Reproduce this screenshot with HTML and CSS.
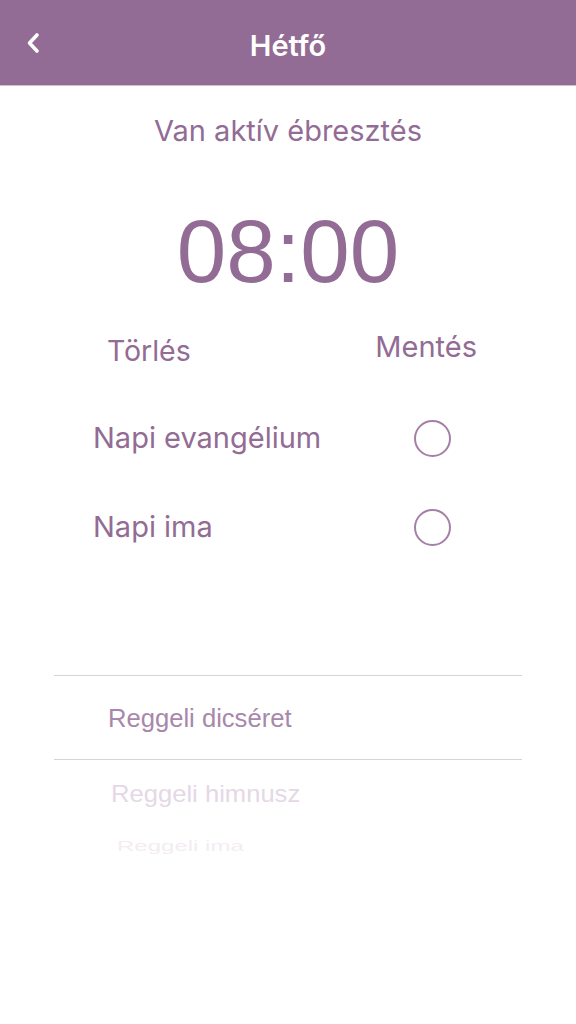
FILE: index.html
```html
<!DOCTYPE html>
<html lang="hu">
<head>
<meta charset="utf-8">
<title>Hétfő</title>
<link rel="stylesheet" href="styles.css">
</head>
<body>
<header class="topbar">
  <button class="back" aria-label="Vissza">
    <svg width="16" height="22" viewBox="0 0 16 22"><path d="M12 3 L4.5 11 L12 19" fill="none" stroke="#fff" stroke-width="3.6" stroke-linecap="round" stroke-linejoin="round"/></svg>
  </button>
  <h1 class="title">Hétfő</h1>
</header>
<main class="content">
  <p class="status">Van aktív ébresztés</p>
  <div class="time">08:00</div>
  <div class="actions">
    <span class="action delete">Törlés</span>
    <span class="action save">Mentés</span>
  </div>
  <ul class="options">
    <li class="option"><span>Napi evangélium</span><span class="radio"></span></li>
    <li class="option"><span>Napi ima</span><span class="radio"></span></li>
  </ul>
  <div class="picker">
    <div class="pick selected">Reggeli dicséret</div>
    <div class="pick next">Reggeli himnusz</div>
    <div class="pick far">Reggeli ima</div>
  </div>
</main>
</body>
</html>
```
FILE: styles.css
```css
* { box-sizing: border-box; }
html, body { margin: 0; padding: 0; background: #fff; }
body { width: 576px; height: 1024px; font-family: Inter, "Noto Sans", sans-serif; color: #926c94; }

.topbar {
  height: 86px;
  background: #926c94;
  border-bottom: 1px solid #c9c2c9;
  display: flex;
  align-items: center;
  justify-content: center;
  position: relative;
}
.back {
  position: absolute;
  left: 25px;
  top: 32px;
  background: none;
  border: 0;
  padding: 0;
  display: flex;
}
.title {
  margin: 0;
  color: #fff;
  font-size: 29px;
  font-weight: 600;
  line-height: 32px;
  padding-top: 6px;
}

.content { display: flex; flex-direction: column; }
.status {
  margin: 29px 0 0;
  text-align: center;
  font-size: 29px;
  line-height: 32px;
  font-weight: 400;
}
.time {
  margin-top: 54px;
  text-align: center;
  font-family: "Liberation Sans", Arial, sans-serif;
  font-size: 89px;
  line-height: 100px;
}
.actions {
  margin-top: 30px;
  display: flex;
  font-size: 29px;
  line-height: 32px;
}
.action { display: block; }
.delete { margin-left: 107px; padding-top: 4px; font-size: 28.5px; }
.save { margin-left: auto; margin-right: 99px; }

.options { list-style: none; margin: 52px 0 0; padding: 0; display: flex; flex-direction: column; gap: 51px; }
.option {
  display: flex;
  align-items: center;
  justify-content: space-between;
  padding: 0 125px 0 93px;
  font-size: 29px;
  line-height: 38px;
}
.radio {
  width: 37px;
  height: 37px;
  border: 2px solid #a47fa6;
  border-radius: 50%;
}

.picker {
  margin: 129px 54px 0;
  font-family: "Liberation Sans", Arial, sans-serif;
  display: flex;
  flex-direction: column;
}
.pick { font-size: 25.6px; line-height: 26px; }
.selected {
  border-top: 1px solid #d9d3d9;
  border-bottom: 1px solid #d9d3d9;
  height: 85px;
  padding: 29px 0 0 54px;
  color: #a888aa;
}
.next {
  margin-top: 21px;
  padding-left: 57px;
  color: #e5d8e6;
  transform: scaleY(0.9);
}
.far {
  margin-top: 26px;
  padding-left: 63px;
  color: #f3edf3;
  font-size: 24px;
  transform: scaleY(0.6);
}
```
